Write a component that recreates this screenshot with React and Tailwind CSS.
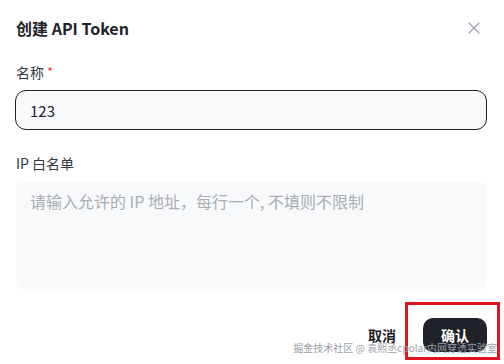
import React, { useState } from 'react';

const font = { fontFamily: '"Noto Sans CJK SC", "Noto Sans", sans-serif' };

const CreateTokenDialog = () => {
    const [name, setName] = useState('123');
    const [ips, setIps] = useState('');

    return (
        <div className="relative w-[504px] h-[364px] bg-white overflow-hidden" style={font}>
            <div className="flex items-center justify-between pl-4 pr-6 pt-[16px] h-[40px]">
                <h1 className="text-[16px] font-bold text-[#1f2229] leading-none">创建 API Token</h1>
                <button className="text-gray-400">
                    <svg width="12" height="12" viewBox="0 0 12 12" fill="none" stroke="currentColor" strokeWidth="1.2" strokeLinecap="round">
                        <path d="M1 1 L11 11 M11 1 L1 11" />
                    </svg>
                </button>
            </div>

            <div className="px-4 pt-[22px]">
                <label className="block text-[14px] text-[#333842] leading-[20px]">
                    名称 <span className="text-red-500 text-[12px] align-top">*</span>
                </label>
                <input
                    value={name}
                    onChange={e => setName(e.target.value)}
                    className="mt-[8px] w-[472px] -ml-px h-[40px] rounded-[11px] border border-[#1f2229] bg-[#f7f9fb] px-[14px] text-[15px] text-[#1f2229] outline-none"
                    style={font}
                />

                <label className="block mt-[23px] text-[14px] text-[#333842] leading-[20px]">IP 白名单</label>
                <textarea
                    value={ips}
                    onChange={e => setIps(e.target.value)}
                    placeholder="请输入允许的 IP 地址，每行一个, 不填则不限制"
                    className="mt-[9px] w-[471px] h-[107px] resize-none rounded-[8px] bg-[#f7f9fa] px-[14px] pt-[7px] text-[16px] text-[#1f2229] placeholder:text-[#a9adb3] outline-none"
                    style={font}
                />
            </div>

            <div className="flex items-center justify-end gap-[27px] pr-[17px] pt-[24px]">
                <button className="text-[14px] font-bold text-[#1f2229]">取消</button>
                <button className="h-[34px] w-[64px] rounded-[10px] bg-[#1f2229] text-[14px] font-bold text-white">确认</button>
            </div>

            <div className="absolute left-[405px] top-[302px] w-[95px] h-[58px] border-[3px] border-[#e0141e] pointer-events-none" />
            <div className="absolute right-[7px] top-[341px] text-[10px] leading-[13px] text-[#9aa0a6] pointer-events-none">
                掘金技术社区 @ 袁熙丞cpolar内网穿透实验室
            </div>
        </div>
    );
};

export default function App() {
    return <CreateTokenDialog />;
}
